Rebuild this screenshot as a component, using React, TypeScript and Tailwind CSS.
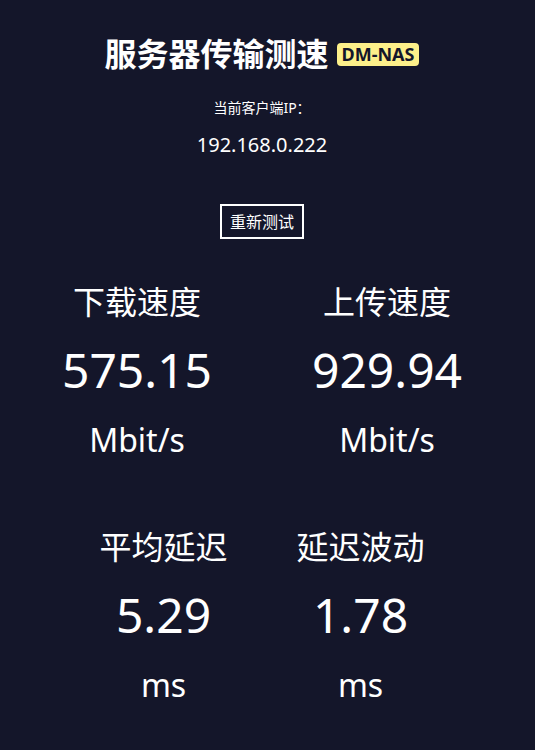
const font = '"Noto Sans", "Noto Sans CJK SC", sans-serif';

interface Stat {
    label: string;
    value: string;
    unit: string;
}

const speeds: Stat[] = [
    { label: "下载速度", value: "575.15", unit: "Mbit/s" },
    { label: "上传速度", value: "929.94", unit: "Mbit/s" },
];

const latency: Stat[] = [
    { label: "平均延迟", value: "5.29", unit: "ms" },
    { label: "延迟波动", value: "1.78", unit: "ms" },
];

function StatBlock({ stat, className }: { stat: Stat; className: string }) {
    return (
        <div className={`flex flex-col items-center text-center whitespace-nowrap ${className}`}>
            <div className="text-[32px] leading-[48px]">{stat.label}</div>
            <div className="mt-[14px] text-[48px] leading-[60px]">{stat.value}</div>
            <div className="mt-[16px] text-[32px] leading-[48px]">{stat.unit}</div>
        </div>
    );
}

export default function App() {
    return (
        <div
            className="min-h-screen w-full bg-[#14162a] text-white pr-[11px] flex flex-col items-center"
            style={{ fontFamily: font }}
        >
            <div className="flex items-center justify-center gap-2 pt-[35px]">
                <h1 className="text-[32px] font-bold leading-[38px]">服务器传输测速</h1>
                <span className="bg-[#fdf08a] text-[#14162a] font-bold text-[18px] leading-[23px] px-[5px] rounded-[4px]">
                    DM-NAS
                </span>
            </div>

            <p className="mt-[25px] text-sm leading-[20px]">当前客户端IP：</p>
            <p className="mt-[13px] text-[20px] leading-[28px]">192.168.0.222</p>

            <button className="mt-[45px] h-[35px] px-[8px] border-2 border-white text-base leading-[24px]">
                重新测试
            </button>

            <div className="mt-[39px] flex justify-center">
                {speeds.map((s) => (
                    <StatBlock key={s.label} stat={s} className="w-[250px]" />
                ))}
            </div>

            <div className="mt-[59px] flex justify-center gap-[70px]">
                {latency.map((s) => (
                    <StatBlock key={s.label} stat={s} className="w-[127px]" />
                ))}
            </div>
        </div>
    );
}
